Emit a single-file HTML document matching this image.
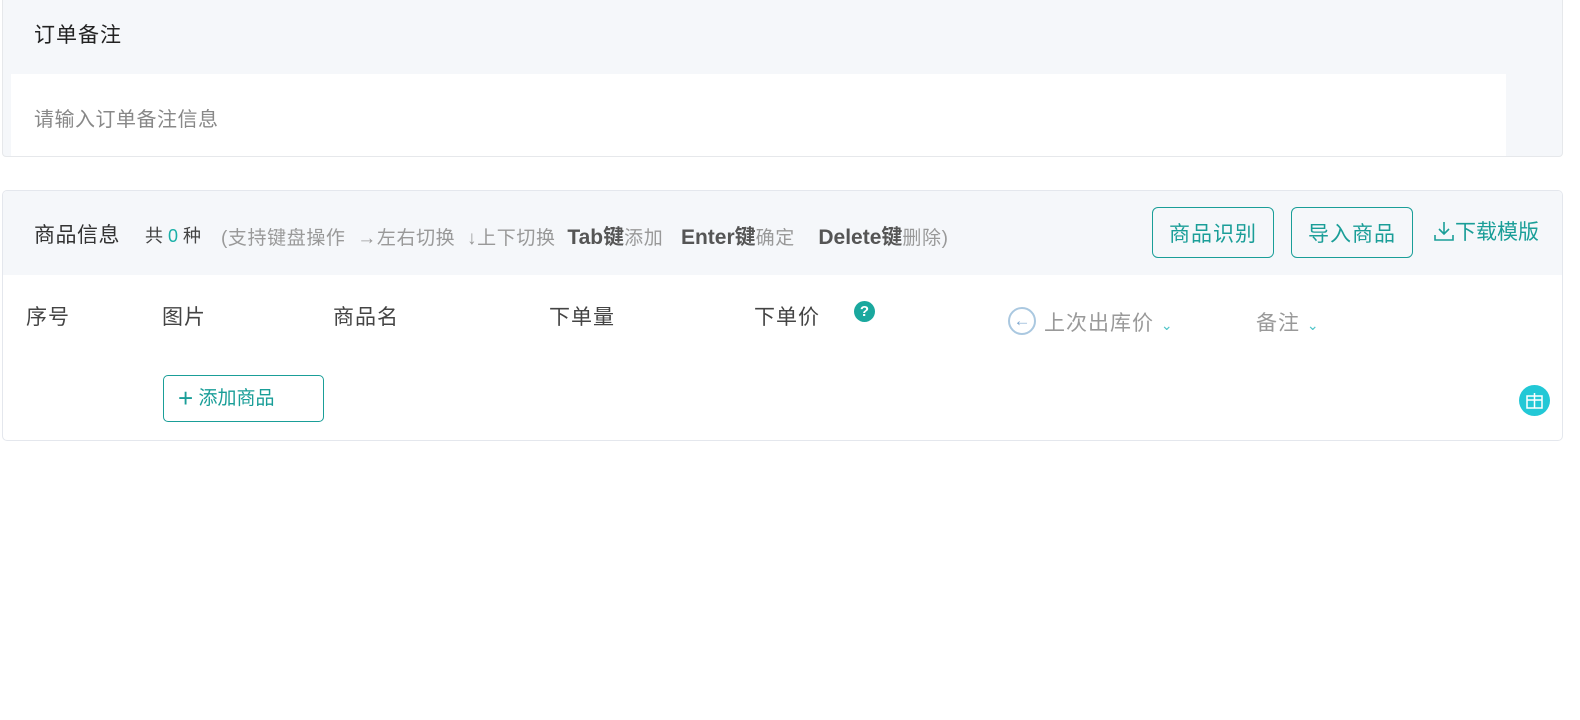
<!DOCTYPE html>
<html><head><meta charset="utf-8"><style>
*{margin:0;padding:0;box-sizing:border-box}
body{width:1580px;height:720px;background:#fff;font-family:"Liberation Sans","Noto Sans CJK SC",sans-serif;position:relative;overflow:hidden;color:#333}
.abs{position:absolute;white-space:nowrap}
.card1{position:absolute;left:2px;top:-4px;width:1561px;height:161px;border:1px solid #e6e8eb;border-radius:4px;background:#f5f7fa;overflow:hidden}
.card1 .body{position:absolute;left:8px;top:77px;width:1495px;height:84px;background:#fff}
.card2{position:absolute;left:2px;top:190px;width:1561px;height:251px;border:1px solid #e4e7ed;border-radius:5px;background:#fff;overflow:hidden}
.card2 .hd{position:absolute;left:0;top:0;width:100%;height:84px;background:#f5f7fa}
.btn{position:absolute;top:16px;height:51px;border:1px solid #1a9e98;border-radius:6px;color:#1a9e98;font-size:21px;letter-spacing:1px;display:flex;align-items:center;justify-content:center}
.th{position:absolute;top:110px;font-size:21px;color:#444;letter-spacing:1px}
</style></head><body>
<div class="card1"><div class="body"></div></div>
<div class="abs" style="left:34px;top:19px;font-size:21px;color:#222;letter-spacing:1px">订单备注</div>
<div class="abs" style="left:34px;top:103px;font-size:20px;color:#888;letter-spacing:0.5px">请输入订单备注信息</div>

<div class="card2">
<div class="hd"></div>
<div class="abs" style="left:31px;top:28px;font-size:21px;color:#333;letter-spacing:0.5px">商品信息</div>
<div class="abs" style="left:142px;top:31px;font-size:18px;color:#444">共 <span style="color:#1ab0a8">0</span> 种</div>
<div class="abs" style="left:218px;top:30px;font-size:19px;color:#999;letter-spacing:0.6px">(支持键盘操作&nbsp;&nbsp;→左右切换&nbsp;&nbsp;↓上下切换&nbsp;&nbsp;<b style="color:#555;font-size:21px;letter-spacing:0">Tab键</b>添加&nbsp;&nbsp;&nbsp;<b style="color:#555;font-size:21px;letter-spacing:0">Enter键</b>确定&nbsp;&nbsp;&nbsp;&nbsp;<b style="color:#555;font-size:21px;letter-spacing:0">Delete键</b>删除)</div>
<div class="btn" style="left:1149px;width:122px">商品识别</div>
<div class="btn" style="left:1288px;width:122px">导入商品</div>
<div class="abs" style="left:1430px;top:25px;font-size:21px;color:#1a9e98"><svg width="22" height="22" viewBox="0 0 22 22" style="vertical-align:-3px"><path d="M11 2v12M6 9l5 5 5-5M2 15v5h18v-5" fill="none" stroke="#1a9e98" stroke-width="1.6"/></svg>下载模版</div>
<div class="th" style="left:23px">序号</div>
<div class="th" style="left:159px">图片</div>
<div class="th" style="left:330px">商品名</div>
<div class="th" style="left:546px">下单量</div>
<div class="th" style="left:751px">下单价</div>
<div class="abs" style="left:851px;top:110px;width:21px;height:21px;border-radius:50%;background:#1aa89e;color:#fff;font-size:15px;font-weight:bold;text-align:center;line-height:21px">?</div>
<div class="abs" style="left:1005px;top:116px;width:28px;height:28px;border:2px solid #aac8e0;border-radius:50%;color:#7fa8d0;font-size:17px;text-align:center;line-height:23px">←</div>
<div class="th" style="left:1041px;top:116px;color:#999">上次出库价 <span style="color:#4cc4c8;font-size:14px">&#8964;</span></div>
<div class="th" style="left:1253px;top:116px;color:#999">备注 <span style="color:#4cc4c8;font-size:14px">&#8964;</span></div>
<div class="abs" style="left:160px;top:184px;width:161px;height:47px;border:1px solid #1a9e98;border-radius:5px;color:#1a9e98;font-size:19px;line-height:45px;padding-left:14px"><span style="font-size:26px;vertical-align:-3px">+</span> 添加商品</div>
<div class="abs" style="left:1516px;top:194px;width:31px;height:31px;border-radius:50%;background:#22c8d6"><svg width="31" height="31" viewBox="0 0 31 31"><rect x="8" y="11" width="15" height="12" fill="none" stroke="#fff" stroke-width="1.5"/><path d="M8 15h15M15.5 8v15" stroke="#fff" stroke-width="1.5"/></svg></div>
</div>
</body></html>
